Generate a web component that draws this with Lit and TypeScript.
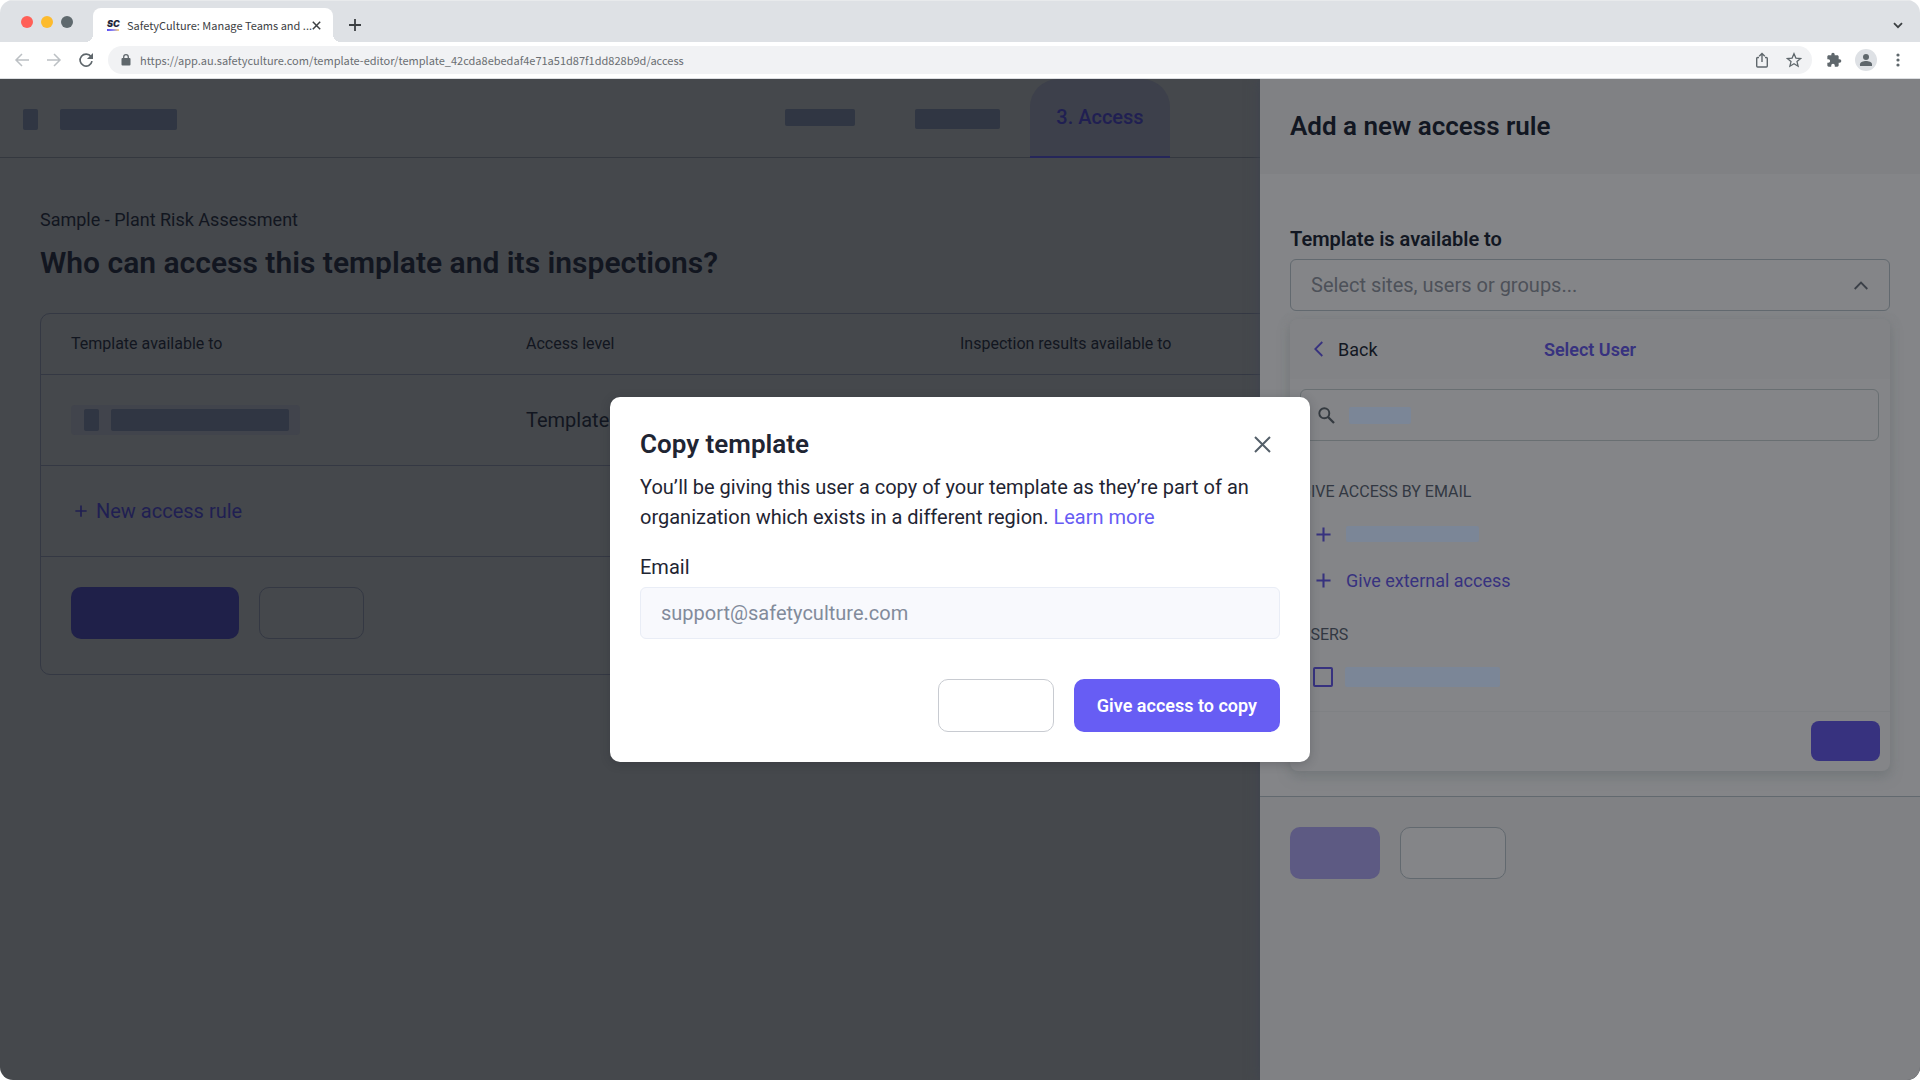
import { LitElement, html, css, svg } from "lit";
import { customElement, property } from "lit/decorators.js";

const plus = (size: number) => html`<svg class="ico" width=${size} height=${size} viewBox="0 0 16 16" aria-hidden="true">
  <path d="M8 0.5V15.5M0.5 8H15.5" fill="none" stroke="currentColor" stroke-width="2.2" />
</svg>`;

const dot = (y: number) => svg`<circle cx="8" cy=${y} r="1.6" />`;

/* Grey bar that stands in for hidden text. */
@customElement("redacted-bar")
class RedactedBar extends LitElement {
  @property({ type: Number }) w = 60;
  @property({ type: Number }) h = 20;

  static styles = css`
    :host { display: inline-block; flex: none; vertical-align: top; }
    .bar { display: block; border-radius: 2px; background: var(--bar, #303643); }
  `;

  render() {
    return html`<span class="bar" style="width:${this.w}px;height:${this.h}px"></span>`;
  }
}

@customElement("browser-chrome")
class BrowserChrome extends LitElement {
  static styles = css`
    :host { display: block; font-family: "Noto Sans CJK SC", "Noto Sans", sans-serif; color: #3c4043; }
    button { border: 0; padding: 0; background: none; color: inherit; display: grid; place-items: center; font: inherit; }
    svg { display: block; }
    .strip { display: flex; align-items: flex-end; height: 42px; box-sizing: border-box; background: #dee1e5; border-top: 1px solid #e8eaec; padding: 0 14px 0 21px; }
    .lights { display: flex; gap: 8px; align-self: center; width: 72px; }
    .light { width: 12px; height: 12px; border-radius: 50%; }
    .close { background: #ff5f57; }
    .min { background: #fdbb2d; }
    .max { background: #5f696e; }
    .tab { position: relative; box-sizing: border-box; display: flex; align-items: center; width: 240px; height: 34px; padding: 0 12px 0 14px; border-radius: 8px 8px 0 0; background: #fff; }
    .tab::before, .tab::after { content: ""; position: absolute; bottom: 0; width: 8px; height: 8px; }
    .tab::before { left: -8px; background: radial-gradient(circle at 0 0, transparent 8px, #fff 8px); }
    .tab::after { right: -8px; background: radial-gradient(circle at 100% 0, transparent 8px, #fff 8px); }
    .logo { width: 14px; margin-right: 7px; font: italic 900 9px/8px Inter, sans-serif; color: #23263a; }
    .logo::after { content: ""; display: block; width: 12px; height: 2px; margin-top: 1px; background: linear-gradient(90deg, #5b4ff0, #8f88f5 50%, #ffd87a); }
    .title { flex: 1; white-space: nowrap; font-size: 11px; line-height: 18px; }
    .new { width: 44px; height: 34px; }
    .more { margin-left: auto; width: 16px; height: 34px; }
    .bar { display: flex; align-items: center; height: 37px; box-sizing: border-box; padding: 0 14px 0 14px; border-bottom: 1px solid #dcdee1; background: #fff; color: #5f676c; }
    .nav { width: 16px; height: 16px; margin-right: 16px; }
    .nav.last { margin-right: 14px; }
    .off { color: #bcc0c4; }
    .pill { flex: 1; display: flex; align-items: center; gap: 16px; height: 28px; box-sizing: border-box; border-radius: 14px; background: #f1f2f4; padding: 0 10px 0 12px; }
    .url { flex: 1; border: 0; background: none; padding: 0; margin-left: -8px; font: 11px/18px "Noto Sans CJK SC", "Noto Sans", sans-serif; color: #6a6e72; outline: 0; }
    .tools { display: flex; align-items: center; gap: 13px; margin-left: 14px; }
    .avatar { width: 22px; height: 22px; border-radius: 50%; background: #dee1e5; }
  `;

  render() {
    return html`
      <div class="strip">
        <div class="lights"><span class="light close"></span><span class="light min"></span><span class="light max"></span></div>
        <div class="tab">
          <span class="logo">SC</span>
          <span class="title">SafetyCulture: Manage Teams and ...</span>
          <button aria-label="Close tab"><svg width="9" height="9" viewBox="0 0 9 9"><path d="M.8.8 8.2 8.2M8.2.8.8 8.2" stroke="currentColor" stroke-width="1.5" /></svg></button>
        </div>
        <button class="new" aria-label="New tab"><svg width="12" height="12" viewBox="0 0 12 12"><path d="M6 0V12M0 6H12" stroke="currentColor" stroke-width="1.8" /></svg></button>
        <button class="more" aria-label="Search tabs"><svg width="10" height="7" viewBox="0 0 10 7"><path d="M1 1.2 5 5.2 9 1.2" fill="none" stroke="currentColor" stroke-width="1.8" /></svg></button>
      </div>
      <div class="bar">
        <button class="nav off" aria-label="Back"><svg width="16" height="16" viewBox="0 0 16 16" fill="none" stroke="currentColor" stroke-width="1.5"><path d="M15 8H2M8 2 2 8 8 14" /></svg></button>
        <button class="nav off" aria-label="Forward"><svg width="16" height="16" viewBox="0 0 16 16" fill="none" stroke="currentColor" stroke-width="1.5"><path d="M1 8H14M8 2 14 8 8 14" /></svg></button>
        <button class="nav last" aria-label="Reload"><svg width="16" height="16" viewBox="0 0 16 16"><path d="M13 4.6A6 6 0 1 0 14 9.2" fill="none" stroke="currentColor" stroke-width="1.7" /><path d="M15 .9V7H8.9Z" fill="currentColor" /></svg></button>
        <div class="pill">
          <svg width="12" height="14" viewBox="0 0 12 14"><rect x="1.5" y="5" width="9" height="7.5" rx="1" fill="currentColor" /><path d="M3.7 5.4V4a2.3 2.3 0 0 1 4.6 0V5.4" fill="none" stroke="currentColor" stroke-width="1.3" /></svg>
          <input class="url" aria-label="Address" readonly value="https://app.au.safetyculture.com/template-editor/template_42cda8ebedaf4e71a51d87f1dd828b9d/access" />
          <button aria-label="Share"><svg width="16" height="16" viewBox="0 0 16 16" fill="none" stroke="currentColor" stroke-width="1.4"><path d="M5 5.5H3.7a1 1 0 0 0-1 1V14a1 1 0 0 0 1 1h8.6a1 1 0 0 0 1-1V6.5a1 1 0 0 0-1-1H11M8 10V1.8M5.2 4.3 8 1.5 10.8 4.3" /></svg></button>
          <button aria-label="Bookmark"><svg width="16" height="16" viewBox="0 0 16 16"><path d="M8 1.7 9.9 6.1 14.6 6.5 11 9.6 12.1 14.2 8 11.8 3.9 14.2 5 9.6 1.4 6.5 6.1 6.1Z" fill="none" stroke="currentColor" stroke-width="1.3" /></svg></button>
        </div>
        <div class="tools">
          <button aria-label="Extensions"><svg width="16" height="16" viewBox="0 0 24 24"><path fill="currentColor" d="M20.5 11H19V7c0-1.1-.9-2-2-2h-4V3.5a2.5 2.5 0 0 0-5 0V5H4c-1.1 0-2 .9-2 2v3.8h1.5a2.7 2.7 0 0 1 0 5.4H2V20c0 1.1.9 2 2 2h3.8v-1.5a2.7 2.7 0 0 1 5.4 0V22H17c1.1 0 2-.9 2-2v-4h1.5a2.5 2.5 0 0 0 0-5z" /></svg></button>
          <button class="avatar" aria-label="Profile"><svg width="14" height="14" viewBox="0 0 14 14" fill="currentColor"><circle cx="7" cy="4" r="3" /><path d="M1 13V11.2C1 9 4.5 8 7 8s6 1 6 3.2V13Z" /></svg></button>
          <button aria-label="Menu"><svg width="16" height="16" viewBox="0 0 16 16" fill="currentColor">${[3, 8, 13].map(dot)}</svg></button>
        </div>
      </div>
    `;
  }
}

@customElement("template-page")
class TemplatePage extends LitElement {
  static styles = css`
    :host { display: block; color: #121620; }
    button { font: inherit; padding: 0; background: none; border: 0; color: inherit; }
    .top { display: grid; grid-template-columns: 1fr auto 1fr; align-items: stretch; height: 79px; box-sizing: border-box; padding: 0 18px 0 23px; border-bottom: 1px solid #34383f; }
    .crumbs { display: flex; gap: 22px; padding-top: 30px; }
    .tabs { display: flex; }
    .tab { display: flex; justify-content: center; padding: 30px 30px 0; }
    .tab.on { padding: 26px 26px 0; align-items: flex-start; border-radius: 28px 28px 0 0; background: #3d404b; color: #201f52; font-size: 20px; line-height: 24px; font-weight: 500; text-decoration: none; border-bottom: 2px solid #25265a; margin-bottom: -1px; }
    .body { padding: 51px 40px 40px; }
    .name { margin: 0; font-size: 18px; line-height: 22px; }
    .head { margin: 14px 0 0; font-size: 30px; line-height: 36px; font-weight: 600; }
    .card { margin-top: 32px; border: 1px solid #343843; border-radius: 10px; }
    table { width: 100%; border-collapse: collapse; table-layout: fixed; }
    th, td { box-sizing: border-box; text-align: left; padding: 0 0 0 30px; border-bottom: 1px solid #343843; font-weight: 400; }
    .c1 { width: 455px; }
    .c2 { width: 434px; }
    th { height: 60px; font-size: 16px; }
    td { height: 91px; font-size: 20px; }
    .chip { display: inline-flex; gap: 12px; padding: 4px 11px 4px 13px; border-radius: 4px; background: #41444c; vertical-align: middle; }
    .add { display: flex; align-items: center; height: 90px; padding: 0 30px; border-bottom: 1px solid #343843; }
    .link { display: flex; align-items: center; gap: 9px; padding-left: 4px; color: #201f52; font-size: 20px; }
    .acts { display: flex; gap: 20px; padding: 30px 30px 35px; }
    .main { width: 168px; height: 52px; border-radius: 10px; background: #1f2049; }
    .alt { width: 105px; height: 52px; border-radius: 10px; border: 1px solid #343843; }
  `;

  render() {
    return html`
      <header class="top">
        <div class="crumbs"><redacted-bar w="15" h="21"></redacted-bar><redacted-bar w="117" h="21"></redacted-bar></div>
        <nav class="tabs">
          <span class="tab"><redacted-bar w="70" h="17"></redacted-bar></span>
          <span class="tab"><redacted-bar w="85" h="20"></redacted-bar></span>
          <a class="tab on" href="#access">3. Access</a>
        </nav>
      </header>
      <section class="body">
        <p class="name">Sample - Plant Risk Assessment</p>
        <h1 class="head">Who can access this template and its inspections?</h1>
        <div class="card">
          <table>
            <thead><tr><th class="c1">Template available to</th><th class="c2">Access level</th><th>Inspection results available to</th></tr></thead>
            <tbody><tr>
              <td><span class="chip"><redacted-bar w="15" h="22"></redacted-bar><redacted-bar w="178" h="22"></redacted-bar></span></td>
              <td>Template</td><td></td>
            </tr></tbody>
          </table>
          <div class="add"><button class="link">${plus(12)}<span>New access rule</span></button></div>
          <div class="acts"><button class="main" aria-label="Save"></button><button class="alt" aria-label="Cancel"></button></div>
        </div>
      </section>
    `;
  }
}

@customElement("rule-drawer")
class RuleDrawer extends LitElement {
  static styles = css`
    :host { display: flex; flex-direction: column; background: #808184; color: #121722; --bar: #7b8697; box-shadow: 0 0 12px #3f4450; }
    button { font: inherit; padding: 0; background: none; border: 0; color: inherit; }
    svg { display: block; flex: none; }
    .top { padding: 30px 30px 31px; }
    .top h2 { margin: 0; font-size: 26px; line-height: 34px; font-weight: 600; }
    .body { padding: 52px 30px 25px; background: #848588; border-bottom: 1px solid #62696f; }
    .lab { display: block; font-size: 20px; line-height: 26px; font-weight: 600; margin-bottom: 7px; }
    .pick { display: grid; align-items: center; }
    .pick > * { grid-area: 1 / 1; }
    .pick svg { justify-self: end; margin-right: 22px; color: #3b4048; pointer-events: none; }
    select { appearance: none; width: 100%; height: 52px; border: 1px solid #62696f; border-radius: 6px; padding: 0 20px; background: #848588; color: #4d5159; font: 20px/26px Roboto, sans-serif; }
    .menu { margin-top: 8px; border-radius: 8px; background: #848588; box-shadow: 0 6px 12px #74787b, 0 0 8px #7e8083; }
    .nav { display: grid; grid-template-columns: 1fr auto 1fr; align-items: center; height: 60px; padding: 0 24px; font-size: 18px; box-sizing: border-box; background: #828386; border-radius: 8px 8px 0 0; }
    .back { display: flex; align-items: center; gap: 15px; }
    .back svg { color: #37327f; }
    .nav strong { font-weight: 600; color: #37327f; }
    .find { display: grid; align-items: center; margin: 10px 11px 0 10px; }
    .find > * { grid-area: 1 / 1; }
    .find input { width: 100%; height: 52px; box-sizing: border-box; border: 1px solid #696f72; border-radius: 6px; background: none; padding: 0 48px; font: 18px/24px Roboto, sans-serif; }
    .hint { display: flex; align-items: center; gap: 14px; padding-left: 18px; color: #343a40; pointer-events: none; }
    .list { padding: 40px 10px 24px; }
    h3 { margin: 0; font-size: 16px; line-height: 22px; font-weight: 400; color: #323842; }
    .row { display: flex; align-items: center; gap: 15px; height: 46px; padding-left: 16px; font-size: 18px; color: #37327f; }
    .group { margin-bottom: 21px; padding-top: 8px; }
    .users { display: flex; align-items: center; gap: 12px; padding: 21px 0 0 13px; }
    .users input { appearance: none; width: 20px; height: 20px; margin: 0; border: 2px solid #37327f; border-radius: 2px; }
    .foot { display: flex; justify-content: flex-end; padding: 9px 10px 10px; border-top: 1px solid #7f8184; }
    .done { width: 69px; height: 40px; border-radius: 8px; background: #37327f; }
    .acts { display: flex; gap: 20px; padding: 30px; }
    .save { width: 90px; height: 52px; border-radius: 10px; background: #5d5a83; }
    .alt { width: 106px; height: 52px; border-radius: 10px; border: 1px solid #62696f; background: #848588; }
  `;

  render() {
    return html`
      <header class="top"><h2>Add a new access rule</h2></header>
      <div class="body">
        <label class="lab" for="who">Template is available to</label>
        <div class="pick">
          <select id="who"><option>Select sites, users or groups...</option></select>
          <svg width="14" height="9" viewBox="0 0 14 9"><path d="M.7 8 7 1.5 13.3 8" fill="none" stroke="currentColor" stroke-width="1.8" /></svg>
        </div>
        <div class="menu">
          <div class="nav">
            <button class="back"><svg width="9" height="16" viewBox="0 0 9 16"><path d="M8.3 1 1.3 8 8.3 15" fill="none" stroke="currentColor" stroke-width="1.8" /></svg>Back</button>
            <strong>Select User</strong>
          </div>
          <div class="find">
            <input type="text" aria-label="Search users" />
            <span class="hint">
              <svg width="17" height="17" viewBox="0 0 17 17"><circle cx="6.3" cy="6.3" r="5" fill="none" stroke="currentColor" stroke-width="1.9" /><path d="M10 10 16 16" stroke="currentColor" stroke-width="2.3" /></svg>
              <redacted-bar w="62" h="17"></redacted-bar>
            </span>
          </div>
          <div class="list">
            <h3>GIVE ACCESS BY EMAIL</h3>
            <div class="group">
              <button class="row" aria-label="Give access to this address">${plus(15)}<redacted-bar w="133" h="16"></redacted-bar></button>
              <button class="row">${plus(15)}<span>Give external access</span></button>
            </div>
            <h3>USERS</h3>
            <label class="users"><input type="checkbox" aria-label="User" /><redacted-bar w="155" h="20"></redacted-bar></label>
          </div>
          <div class="foot"><button class="done" aria-label="Done"></button></div>
        </div>
      </div>
      <div class="acts"><button class="save" aria-label="Save"></button><button class="alt" aria-label="Cancel"></button></div>
    `;
  }
}

@customElement("copy-dialog")
class CopyDialog extends LitElement {
  static styles = css`
    :host { display: block; box-sizing: border-box; width: 700px; padding: 30px; border-radius: 10px; background: #fff; color: #1f2533; box-shadow: 0 2px 10px rgba(30, 34, 44, 0.25); }
    button { font: inherit; padding: 0; border: 0; background: none; color: inherit; }
    .top { display: flex; justify-content: space-between; align-items: center; height: 34px; }
    h2 { margin: 0; font-size: 26px; line-height: 34px; font-weight: 600; }
    .x { display: grid; padding: 9px; color: #545f69; }
    p { margin: 11px 0 0; font-size: 20px; line-height: 30px; }
    a { color: #675df4; text-decoration: none; }
    label { display: block; margin-top: 22px; font-size: 20px; line-height: 26px; }
    .mail { display: block; width: 100%; height: 52px; box-sizing: border-box; margin-top: 7px; padding: 0 20px; border: 1px solid #e9edf6; border-radius: 6px; background: #f8f9fd; color: #828b9b; font: 20px/26px Roboto, sans-serif; outline: 0; }
    .acts { display: flex; justify-content: flex-end; gap: 20px; margin-top: 40px; }
    .alt { width: 116px; height: 53px; border: 1px solid #c8cbd1; border-radius: 10px; }
    .go { height: 53px; padding: 0 23px; border-radius: 10px; background: #675df4; color: #fff; font-size: 18px; font-weight: 600; }
  `;

  render() {
    return html`
      <div class="top">
        <h2>Copy template</h2>
        <button class="x" aria-label="Close"><svg width="17" height="17" viewBox="0 0 17 17"><path d="M1 1 16 16M16 1 1 16" stroke="currentColor" stroke-width="2" /></svg></button>
      </div>
      <p>You’ll be giving this user a copy of your template as they’re part of an organization which exists in a different region. <a href="#learn">Learn more</a></p>
      <label for="mail">Email</label>
      <input id="mail" class="mail" type="email" readonly value="support@safetyculture.com" />
      <div class="acts"><button class="alt" aria-label="Cancel"></button><button class="go">Give access to copy</button></div>
    `;
  }
}

@customElement("app-root")
class AppRoot extends LitElement {
  static styles = css`
    :host { display: block; background: #fff; font-family: Roboto, sans-serif; }
    .window { display: flex; flex-direction: column; min-height: 100vh; border-radius: 13px; overflow: hidden; }
    .stage { position: relative; flex: 1; background: #45484c; overflow: hidden; }
    .drawer { position: absolute; top: 0; right: 0; bottom: 0; width: 660px; }
    .scrim { position: absolute; inset: 0; display: grid; place-items: center; }
  `;

  render() {
    return html`
      <div class="window">
        <browser-chrome></browser-chrome>
        <main class="stage">
          <template-page></template-page>
          <rule-drawer class="drawer"></rule-drawer>
          <div class="scrim"><copy-dialog role="dialog" aria-label="Copy template"></copy-dialog></div>
        </main>
      </div>
    `;
  }
}
